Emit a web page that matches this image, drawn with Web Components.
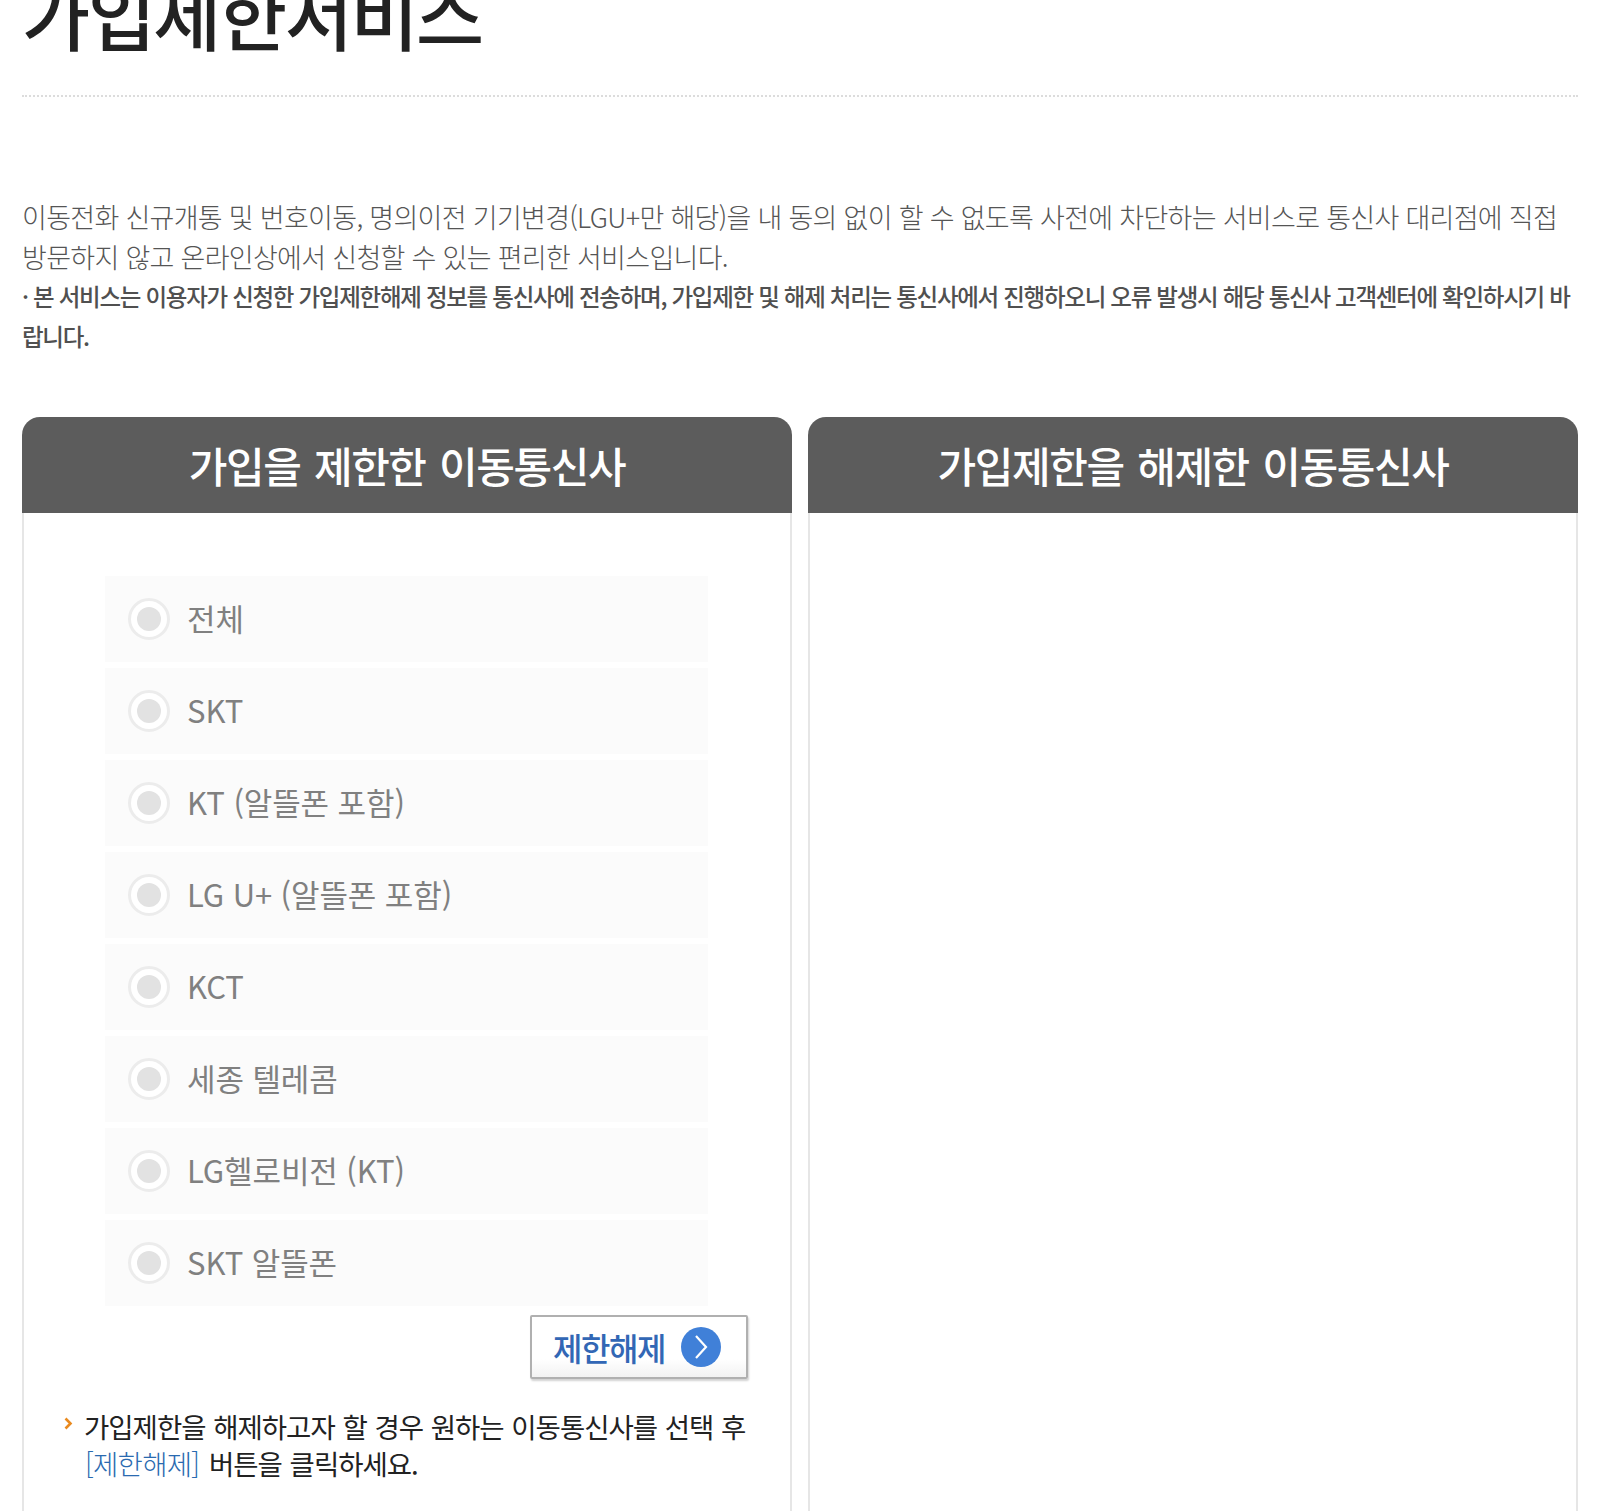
<!DOCTYPE html>
<html lang="ko"><head><meta charset="utf-8"><title>가입제한서비스</title>
<style>
html,body{margin:0;background:#fff;height:1511px;overflow:hidden}
body{font-family:"Noto Sans CJK KR","Noto Sans",sans-serif}
</style></head><body>
<signup-page>
<page-title>가입제한서비스</page-title>
<intro-text></intro-text>
</signup-page>
<script>
const F='"Noto Sans CJK KR","Noto Sans",sans-serif';
function def(name,html){customElements.define(name,class extends HTMLElement{constructor(){super();this.attachShadow({mode:'open'}).innerHTML=html;}});}
def('page-title',`<style>:host{display:block;height:95px;overflow:hidden;border-bottom:2px dotted #dcdcdc}
h1{margin:-25px 0 0;font:500 74px/76px ${F};letter-spacing:-2.4px;color:#222}</style><h1><slot></slot></h1>`);
def('intro-text',`<style>:host{display:block;margin-top:100px;font-family:${F}}
p{margin:0 0 -1px;font-size:27px;line-height:40px;font-weight:300;color:#555;letter-spacing:-.7px}
small{display:block;font-size:23.5px;line-height:40px;font-weight:500;color:#505050;letter-spacing:-1.27px}</style>
<p>이동전화 신규개통 및 번호이동, 명의이전 기기변경(LGU+만 해당)을 내 동의 없이 할 수 없도록 사전에 차단하는 서비스로 통신사 대리점에 직접 방문하지 않고 온라인상에서 신청할 수 있는 편리한 서비스입니다.</p>
<small>· 본 서비스는 이용자가 신청한 가입제한해제 정보를 통신사에 전송하며, 가입제한 및 해제 처리는 통신사에서 진행하오니 오류 발생시 해당 통신사 고객센터에 확인하시기 바랍니다.</small>`);
def('carrier-panel',`<style>:host{display:flex;flex-direction:column;font-family:${F};height:1094px}
header{flex:none;box-sizing:border-box;height:96px;padding-bottom:2px;background:#5c5c5c;border-radius:18px 18px 0 0;color:#fff;font-size:42px;font-weight:500;letter-spacing:-1.4px;display:flex;align-items:center;justify-content:center;word-spacing:3px}
.b{flex:1;border:solid #e6e6e6;border-width:0 2px}</style>
<header><slot name="title"></slot></header><div class="b"><slot></slot></div>`);
def('carrier-row',`<style>:host{display:flex;align-items:center;height:86px;margin-bottom:6px;background:#fbfbfb;padding-left:23px;font-family:${F};font-size:31px;color:#808080;font-weight:400;letter-spacing:-.1px}
i{flex:none;width:36px;height:36px;margin-right:17px;border-radius:50%;background:#fff;border:3px solid #ececec;display:flex;align-items:center;justify-content:center}
i::after{content:"";width:24px;height:24px;border-radius:50%;background:#e2e2e2}
span{margin-bottom:4px}</style><i></i><span><slot></slot></span>`);
def('release-button',`<style>:host{display:flex;align-items:center;box-sizing:border-box;width:218px;height:64px;border:2px solid #b0b0b0;border-radius:2px;box-shadow:1px 2px 2px rgba(0,0,0,.18);background:linear-gradient(#fff 70%,#f2f2f2);padding-left:21px;gap:16px;color:#3267b5;font:500 32px ${F};letter-spacing:-1.4px}
svg{flex:none}</style><slot></slot><svg width="40" height="40" viewBox="0 0 40 40"><circle cx="20" cy="20" r="20" fill="#4080d8"/><path d="M15 9l10 11-10 11" fill="none" stroke="#fff" stroke-width="2.200"/></svg>`);
def('help-note',`<style>:host{display:block;position:relative;padding-left:60px;font:400 27.5px/37px ${F};letter-spacing:-1px;color:#222;word-spacing:1px}
svg{position:absolute;left:40px;top:9px}</style>
<svg width="9" height="13" viewBox="0 0 9 13"><path d="M1.500 1.500l5 5-5 5" fill="none" stroke="#e98a1f" stroke-width="2.600"/></svg><slot></slot>`);
def('signup-page',`<style>:host{display:block;padding:0 20px 0 22px}
.grid{display:grid;grid-template-columns:770px 770px;gap:16px;margin-top:61px}
.list{padding:63px 0 0 81px;width:603px}
.act{display:flex;justify-content:flex-end;width:724px;margin-top:9px}
.note{margin-top:29px}
.hl{color:#2a6ab0;font-weight:300;letter-spacing:-.7px;margin:0 2px 0 1px}</style>
<slot></slot><div class="grid">
<carrier-panel><span slot="title">가입을 제한한 이동통신사</span>
<div class="list"><carrier-row>전체</carrier-row><carrier-row>SKT</carrier-row><carrier-row>KT (알뜰폰 포함)</carrier-row><carrier-row>LG U+ (알뜰폰 포함)</carrier-row><carrier-row>KCT</carrier-row><carrier-row>세종 텔레콤</carrier-row><carrier-row>LG헬로비전 (KT)</carrier-row><carrier-row>SKT 알뜰폰</carrier-row></div>
<div class="act"><release-button>제한해제</release-button></div>
<help-note class="note">가입제한을 해제하고자 할 경우 원하는 이동통신사를 선택 후<br><span class="hl">[제한해제]</span> 버튼을 클릭하세요.</help-note>
</carrier-panel>
<carrier-panel><span slot="title">가입제한을 해제한 이동통신사</span></carrier-panel>
</div>`);
</script>
</body></html>
